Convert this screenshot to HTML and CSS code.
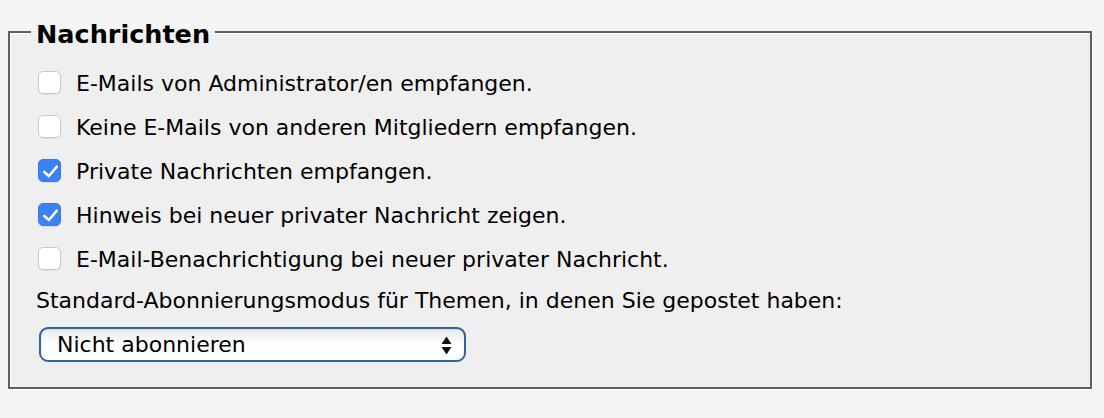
FILE: index.html
```html
<!DOCTYPE html>
<html lang="de">
<head>
<meta charset="utf-8">
<title>Nachrichten</title>
<link rel="stylesheet" href="styles.css">
</head>
<body>
<form class="page">
  <fieldset class="box">
    <legend class="title">Nachrichten</legend>
    <div class="content">
      <label class="opt"><input type="checkbox" class="cb"><span class="txt">E-Mails von Administrator/en empfangen.</span></label>
      <label class="opt"><input type="checkbox" class="cb"><span class="txt">Keine E-Mails von anderen Mitgliedern empfangen.</span></label>
      <label class="opt"><input type="checkbox" class="cb" checked><span class="txt">Private Nachrichten empfangen.</span></label>
      <label class="opt"><input type="checkbox" class="cb" checked><span class="txt">Hinweis bei neuer privater Nachricht zeigen.</span></label>
      <label class="opt"><input type="checkbox" class="cb"><span class="txt">E-Mail-Benachrichtigung bei neuer privater Nachricht.</span></label>
      <div class="hint">Standard-Abonnierungsmodus für Themen, in denen Sie gepostet haben:</div>
      <div class="selwrap">
        <select class="mode">
          <option>Nicht abonnieren</option>
          <option>Ohne Benachrichtigung</option>
          <option>Sofortige E-Mail-Benachrichtigung</option>
        </select>
        <svg class="arrows" width="11" height="19" viewBox="0 0 11 19" aria-hidden="true">
          <path d="M5.5 0.5 L10.5 8 L0.5 8 Z" fill="#111"/>
          <path d="M0.5 11 L10.5 11 L5.5 18.5 Z" fill="#111"/>
        </svg>
      </div>
    </div>
  </fieldset>
</form>
</body>
</html>
```
FILE: styles.css
```css
html, body {
  margin: 0;
  padding: 0;
}
body {
  background: #f5f5f5;
  padding: 8px;
  font-family: "DejaVu Sans", Verdana, sans-serif;
  font-size: 22px;
  color: #000;
}
.page {
  margin: 0;
}
.box {
  margin: 7px 4px 0 0;
  padding: 0;
  border: 2px solid #5f5f5f;
  box-shadow: inset 1px 1px 0 #ffffff, 1px 1px 0 #ffffff;
  background: #efefef;
  min-width: 0;
}
.title {
  margin-left: 21px;
  padding: 4px 5px 0 5px;
  font-size: 25.5px;
  font-weight: bold;
  line-height: 30px;
  color: #000;
}
.content {
  padding: 11px 0 25px 26px;
  display: flex;
  flex-direction: column;
}
.opt {
  display: flex;
  align-items: center;
  height: 44px;
  gap: 15px;
}
.txt {
  padding-top: 2px;
}
.cb {
  appearance: none;
  -webkit-appearance: none;
  margin: 0 0 0 2px;
  width: 23px;
  height: 23px;
  border: 1px solid #c9c9c9;
  border-radius: 5px;
  background: #ffffff;
  box-shadow: 0 1px 1px rgba(0, 0, 0, 0.06);
  position: relative;
  flex: none;
}
.cb:checked {
  background: #3a82f6;
  border-color: #3a7ae8;
}
.cb:checked::after {
  content: "";
  position: absolute;
  left: 7px;
  top: 2px;
  width: 6px;
  height: 12px;
  border: solid #ffffff;
  border-width: 0 3.5px 3.5px 0;
  border-radius: 1px;
  transform: rotate(40deg);
}
.hint {
  height: 40px;
  display: flex;
  align-items: center;
}
.selwrap {
  position: relative;
  margin: 7px 0 0 3px;
  width: 427px;
  height: 35px;
}
.mode {
  appearance: none;
  -webkit-appearance: none;
  width: 427px;
  height: 35px;
  margin: 0;
  padding: 0 30px 0 16px;
  border: 2px solid #33639a;
  border-radius: 9px;
  background: linear-gradient(#ebebeb, #ffffff 55%, #ffffff);
  box-shadow: inset 0 1px 2px rgba(0, 0, 0, 0.08);
  font-family: "DejaVu Sans", Verdana, sans-serif;
  font-size: 22px;
  color: #000;
}
.arrows {
  position: absolute;
  left: 402px;
  top: 9px;
}
```
